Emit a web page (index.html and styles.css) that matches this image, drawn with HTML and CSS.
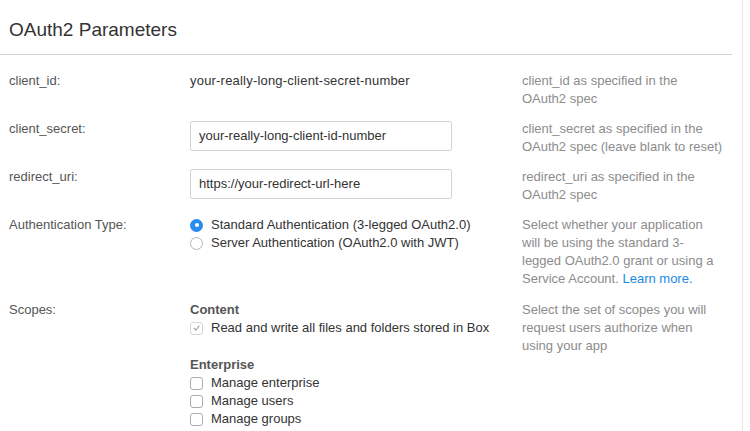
FILE: index.html
```html
<!DOCTYPE html>
<html>
<head>
<meta charset="utf-8">
<link rel="stylesheet" href="styles.css">
</head>
<body>
<div class="page">
  <h1 class="title">OAuth2 Parameters</h1>
  <hr class="rule">
  <div class="form">
    <div class="label">client_id:</div>
    <div class="value"><span class="static">your-really-long-client-secret-number</span></div>
    <div class="desc">client_id as specified in the<br>OAuth2 spec</div>

    <div class="label">client_secret:</div>
    <div class="value"><div class="input">your-really-long-client-id-number</div></div>
    <div class="desc">client_secret as specified in the<br>OAuth2 spec (leave blank to reset)</div>

    <div class="label">redirect_uri:</div>
    <div class="value"><div class="input">https://your-redirect-url-here</div></div>
    <div class="desc">redirect_uri as specified in the<br>OAuth2 spec</div>

    <div class="label">Authentication Type:</div>
    <div class="value">
      <div class="opt"><span class="radio on"></span>Standard Authentication (3-legged OAuth2.0)</div>
      <div class="opt"><span class="radio"></span>Server Authentication (OAuth2.0 with JWT)</div>
    </div>
    <div class="desc">Select whether your application<br>will be using the standard 3-<br>legged OAuth2.0 grant or using a<br>Service Account. <a class="link">Learn more.</a></div>

    <div class="label scopes">Scopes:</div>
    <div class="value scopes">
      <div class="group">Content</div>
      <div class="opt"><span class="check disabled"><svg viewBox="0 0 12 12" width="12" height="12"><path d="M3.3 6.2 L5.2 8.3 L8.8 3.7" fill="none" stroke="#a0a0a0" stroke-width="1.1" stroke-linecap="round" stroke-linejoin="round"/></svg></span>Read and write all files and folders stored in Box</div>
      <div class="group spaced">Enterprise</div>
      <div class="opt"><span class="check"></span>Manage enterprise</div>
      <div class="opt"><span class="check"></span>Manage users</div>
      <div class="opt"><span class="check"></span>Manage groups</div>
      <div class="opt"><span class="check"></span></div>
    </div>
    <div class="desc scopes">Select the set of scopes you will<br>request users authorize when<br>using your app</div>
  </div>
</div>
</body>
</html>
```

FILE: styles.css
```css
html, body {
  margin: 0;
  padding: 0;
  background: #fff;
  overflow: hidden;
}
body {
  font-family: "Helvetica Neue", Helvetica, "Liberation Sans", Arial, sans-serif;
  font-size: 13px;
  line-height: 18px;
  color: #333;
}
.page {
  width: 732px;
  height: 431px;
  padding-right: 10px;
  border-right: 1px solid #e6e6e6;
  overflow: hidden;
}
.title {
  margin: 0;
  padding: 18px 0 0 9px;
  font-size: 19px;
  line-height: 24px;
  font-weight: normal;
  color: #333;
}
.rule {
  margin: 12px 0 0 0;
  border: 0;
  border-top: 1px solid #d4d4d4;
  height: 0;
}
.form {
  display: grid;
  grid-template-columns: 181px 332px 210px;
  row-gap: 12px;
  padding: 17px 0 0 9px;
}
.label {
  color: #555;
}
.value {
  color: #333;
}
.static {
  letter-spacing: 0.2px;
}
.desc {
  color: #8c8c8c;
  white-space: nowrap;
}
.scopes {
  margin-top: 1px;
}
.link {
  color: #1a8ae6;
  text-decoration: none;
}
.input {
  box-sizing: border-box;
  width: 262px;
  height: 30px;
  margin-top: 1px;
  border: 1px solid #d3d3d3;
  border-radius: 2px;
  padding: 5px 8px;
  line-height: 18px;
  color: #333;
}
.opt {
  display: flex;
  align-items: center;
  gap: 8px;
  height: 18px;
}
.radio {
  box-sizing: border-box;
  width: 13px;
  height: 13px;
  border-radius: 50%;
  border: 1px solid #b5b5b5;
  background: #fff;
  flex: none;
  position: relative;
}
.radio.on {
  border: none;
  background: #2b8cf0;
}
.radio.on::after {
  content: "";
  position: absolute;
  left: 4.5px;
  top: 4.5px;
  width: 4px;
  height: 4px;
  border-radius: 50%;
  background: #fff;
}
.check {
  box-sizing: border-box;
  width: 13px;
  height: 13px;
  border-radius: 3px;
  border: 1px solid #ababab;
  background: #fff;
  flex: none;
  display: flex;
  align-items: center;
  justify-content: center;
}
.check svg {
  display: block;
}
.check.disabled {
  border-color: #d6d6d6;
}
.group {
  font-weight: bold;
  color: #555;
}
.group.spaced {
  margin-top: 19px;
}
```
